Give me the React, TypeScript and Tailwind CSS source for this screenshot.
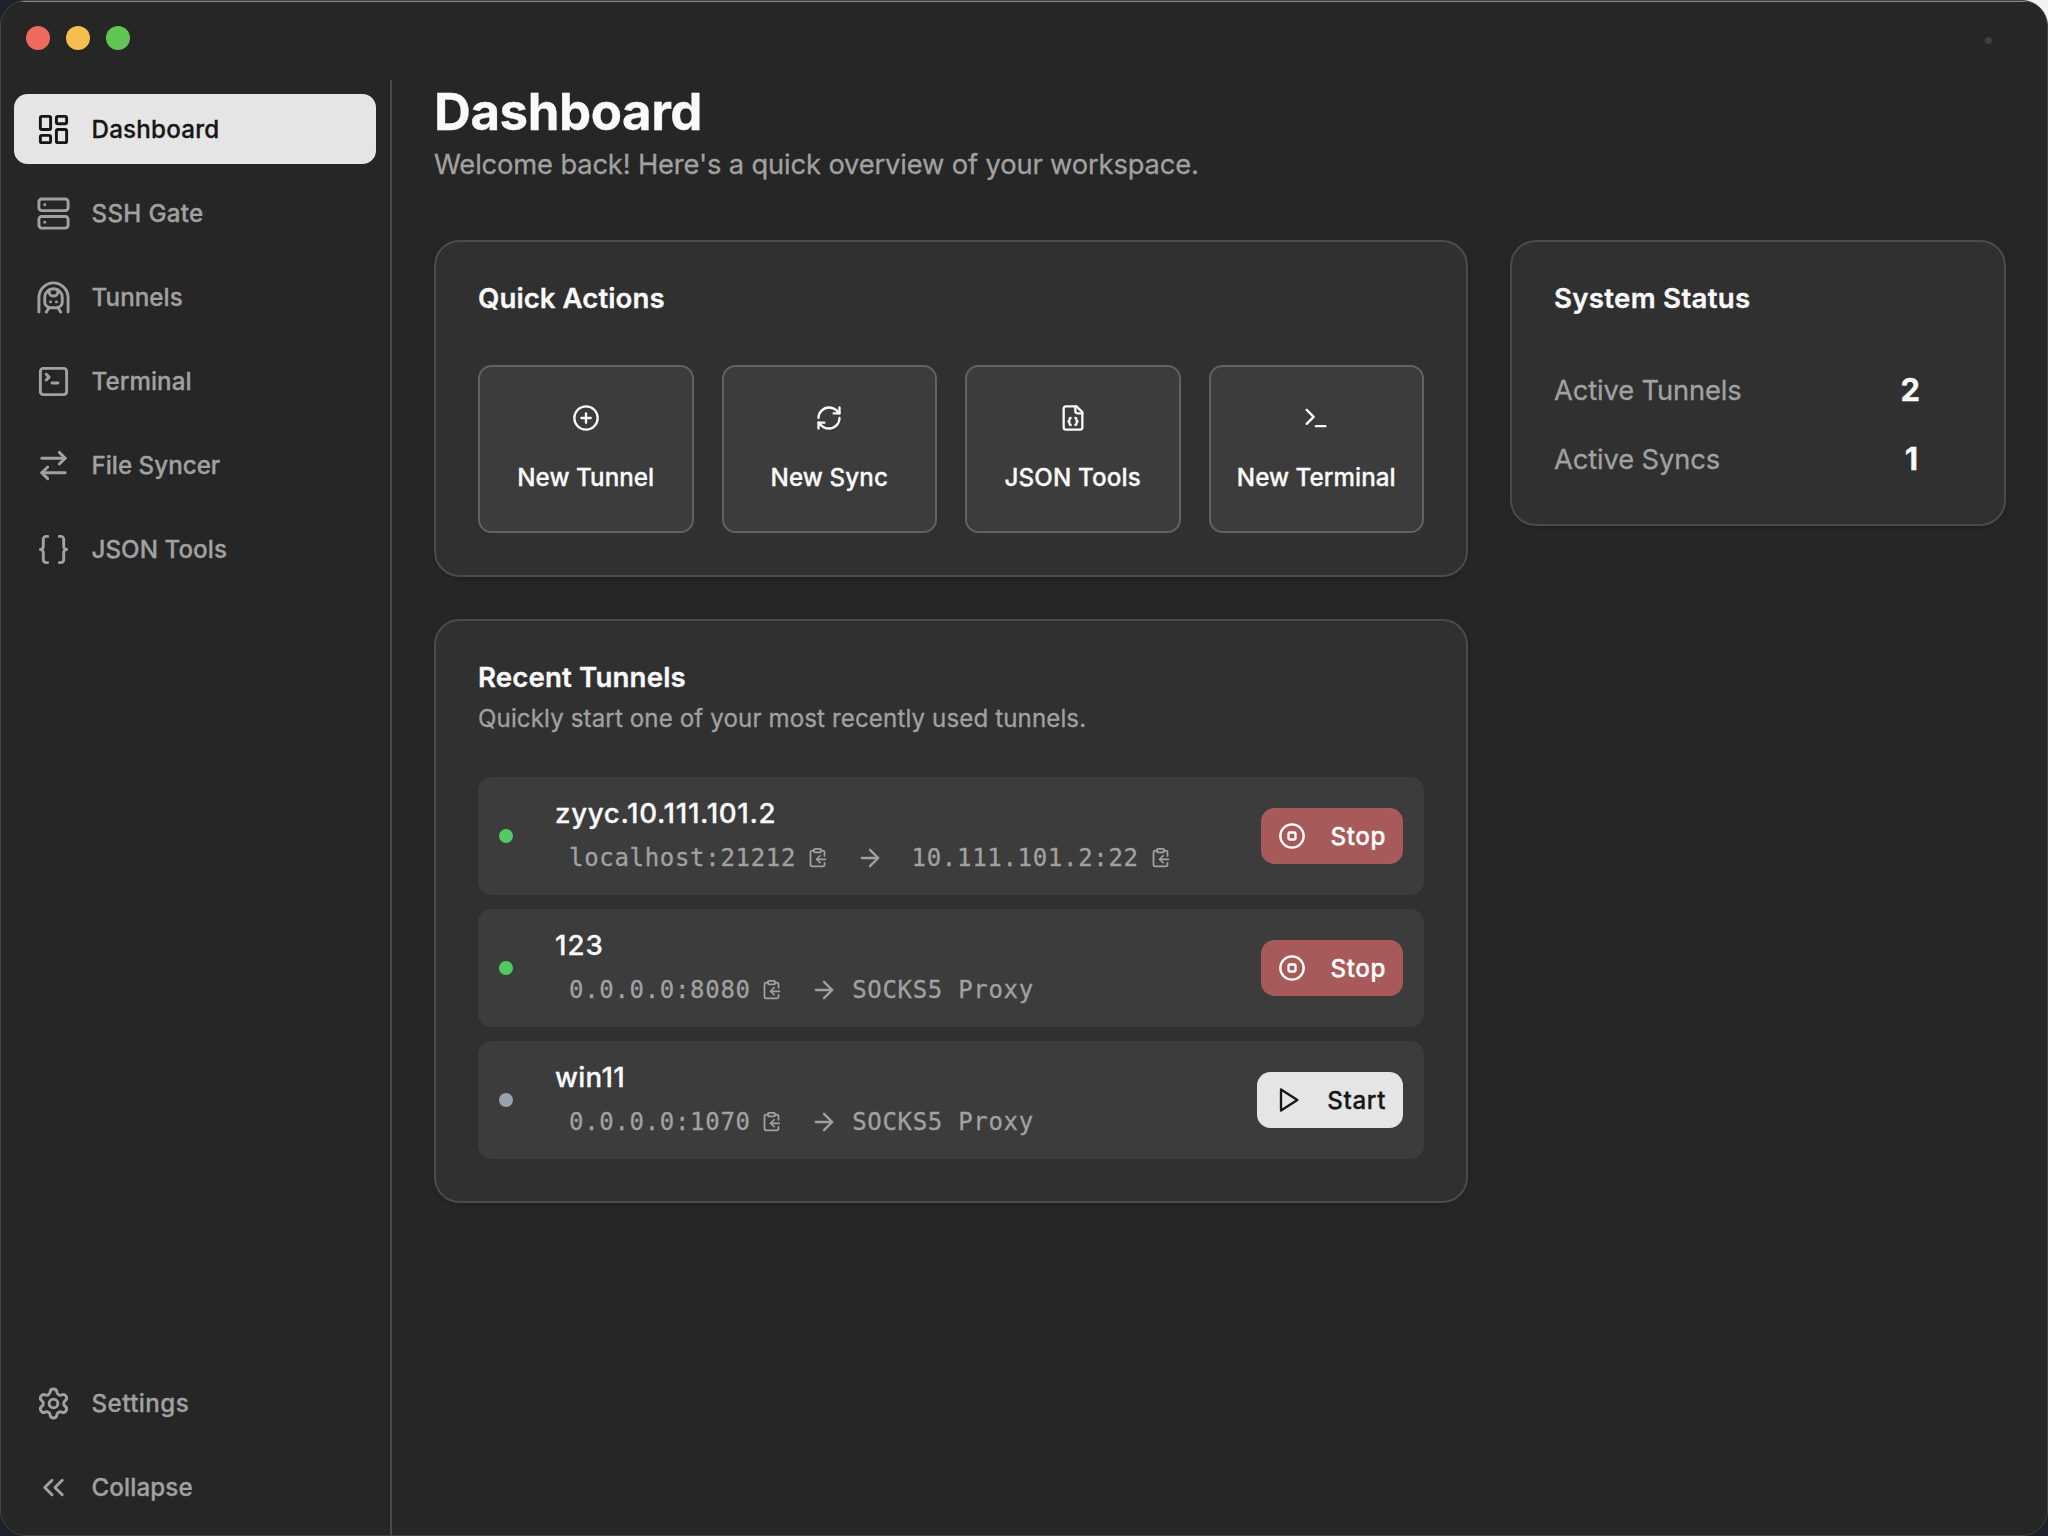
import React from "react";
import {
  ArrowRight,
  ArrowRightLeft,
  Braces,
  ChevronsLeft,
  CirclePlus,
  CircleStop,
  LayoutDashboard,
  RefreshCw,
  Server,
  Settings,
  SquareTerminal,
  Terminal,
  TrainFrontTunnel,
} from "lucide-react";

type IconType = React.ComponentType<{ className?: string; strokeWidth?: number }>;

type NavEntry = { label: string; icon: IconType; tracking: string; active?: boolean };

const mainNav: NavEntry[] = [
  { label: "Dashboard", icon: LayoutDashboard, tracking: "tracking-[0.2px]", active: true },
  { label: "SSH Gate", icon: Server, tracking: "tracking-[0.3px]" },
  { label: "Tunnels", icon: TrainFrontTunnel, tracking: "tracking-[0.05px]" },
  { label: "Terminal", icon: SquareTerminal, tracking: "tracking-[0.05px]" },
  { label: "File Syncer", icon: ArrowRightLeft, tracking: "tracking-[0px]" },
  { label: "JSON Tools", icon: Braces, tracking: "tracking-[0.04px]" },
];

const footerNav: NavEntry[] = [
  { label: "Settings", icon: Settings, tracking: "tracking-[0.42px]" },
  { label: "Collapse", icon: ChevronsLeft, tracking: "tracking-[0.1px]" },
];

function FileJsonIcon({ className }: { className?: string }) {
  return (
    <svg
      className={className}
      viewBox="0 0 24 24"
      fill="none"
      stroke="currentColor"
      strokeWidth={2}
      strokeLinecap="round"
      strokeLinejoin="round"
    >
      <path d="M15 2H6a2 2 0 0 0-2 2v16a2 2 0 0 0 2 2h12a2 2 0 0 0 2-2V7Z" />
      <path d="M14 2v4a2 2 0 0 0 2 2h4" />
      <path d="M10 12a1 1 0 0 0-1 1v1a1 1 0 0 1-1 1 1 1 0 0 1 1 1v1a1 1 0 0 0 1 1" />
      <path d="M14 18a1 1 0 0 0 1-1v-1a1 1 0 0 1 1-1 1 1 0 0 1-1-1v-1a1 1 0 0 0-1-1" />
    </svg>
  );
}

function ClipboardCopyIcon() {
  return (
    <svg
      className="size-[21px] shrink-0"
      viewBox="0 0 24 24"
      fill="none"
      stroke="currentColor"
      strokeWidth={2}
      strokeLinecap="round"
      strokeLinejoin="round"
    >
      <rect width="8" height="4" x="8" y="2" rx="1" ry="1" />
      <path d="M8 4H6a2 2 0 0 0-2 2v14a2 2 0 0 0 2 2h12a2 2 0 0 0 2-2v-2" />
      <path d="M16 4h2a2 2 0 0 1 2 2v4" />
      <path d="M21 14H11" />
      <path d="m15 10-4 4 4 4" />
    </svg>
  );
}

function PlayIcon() {
  return (
    <svg
      className="size-7"
      viewBox="0 0 24 24"
      fill="none"
      stroke="currentColor"
      strokeWidth={2}
      strokeLinecap="round"
      strokeLinejoin="round"
    >
      <polygon points="6 3 20 12 6 21 6 3" />
    </svg>
  );
}

function NavItem({ label, icon: Icon, tracking, active }: NavEntry) {
  return (
    <button
      className={`flex h-[70px] w-full items-center gap-[21px] rounded-[13.5px] pl-[21.5px] text-[24.2px] font-[540] ${tracking} ${
        active ? "bg-[#e5e5e5] text-[#171717]" : "text-[#a1a1a1]"
      }`}
    >
      <Icon className="size-[35px] shrink-0" strokeWidth={2} />
      <span className="pt-0.5">{label}</span>
    </button>
  );
}

function Card({ className = "", children }: { className?: string; children: React.ReactNode }) {
  return (
    <section
      className={`rounded-[25.5px] border-2 border-[#4b4b4b] bg-[#303030] px-[42px] shadow-[0_2px_4px_rgba(0,0,0,0.14)] ${className}`}
    >
      {children}
    </section>
  );
}

const actions: { label: string; icon: IconType; tracking: string }[] = [
  { label: "New Tunnel", icon: CirclePlus, tracking: "tracking-[0.04px]" },
  { label: "New Sync", icon: RefreshCw, tracking: "tracking-[0.1px]" },
  { label: "JSON Tools", icon: FileJsonIcon, tracking: "tracking-[0.15px]" },
  { label: "New Terminal", icon: Terminal, tracking: "tracking-[0.05px]" },
];

const tunnels = [
  { name: "zyyc.10.111.101.2", tracking: "tracking-[0.66px]", local: "localhost:21212", remote: "10.111.101.2:22", running: true },
  { name: "123", tracking: "tracking-[1px]", local: "0.0.0.0:8080", remote: "", running: true },
  { name: "win11", tracking: "tracking-[0.3px]", local: "0.0.0.0:1070", remote: "", running: false },
];

function TunnelRow({ name, tracking, local, remote, running }: (typeof tunnels)[number]) {
  return (
    <div className="flex h-[118px] items-center rounded-[13.5px] bg-[#3c3c3c] px-[21px]">
      <span className={`size-3.5 shrink-0 rounded-full ${running ? "bg-[#53c961]" : "bg-[#99a1af]"}`} />
      <div className="ml-[42px] flex-1 self-start pt-[15px]">
        <div className={`h-[42px] text-[27.7px] leading-[42px] font-[540] text-[#fafafa] ${tracking}`}>{name}</div>
        <div className="mt-1.5 flex h-[35px] items-center pl-3.5 font-['DejaVu_Sans_Mono',monospace] text-[24px] leading-[35px] tracking-[0.69px] text-[#a1a1a1]">
          <span className="mr-[10.5px] pt-0.5">{local}</span>
          <ClipboardCopyIcon />
          <ArrowRight className="mr-3.5 ml-7 size-7 shrink-0" strokeWidth={2} />
          {remote ? (
            <>
              <span className="mr-[11px] ml-3.5 pt-0.5">{remote}</span>
              <ClipboardCopyIcon />
            </>
          ) : (
            <span className="pt-0.5">SOCKS5 Proxy</span>
          )}
        </div>
      </div>
      {running ? (
        <button className="flex h-14 w-[142px] items-center justify-between rounded-[13.5px] bg-[#a85a5a] px-[17px] text-[24.2px] font-[540] tracking-[0.6px] text-white">
          <CircleStop className="size-7" strokeWidth={2} />
          <span className="pt-0.5">Stop</span>
        </button>
      ) : (
        <button className="flex h-14 w-[146px] items-center justify-between rounded-[13.5px] bg-[#e5e5e5] px-[17px] text-[24.2px] font-[540] tracking-[0.6px] text-[#171717]">
          <PlayIcon />
          <span className="pt-0.5">Start</span>
        </button>
      )}
    </div>
  );
}

export default function App() {
  return (
    <div className="relative h-[1536px] w-[2048px] overflow-hidden bg-[#1f212c] font-['Inter','Liberation_Sans',sans-serif] [-webkit-text-stroke:0.3px]">
      <div className="absolute top-0 right-0 size-7 bg-[#f2f2f2]" />
      <div className="relative flex h-full flex-col overflow-hidden rounded-[26px] border border-[#434343] bg-[#262626]">
        <div className="absolute -top-px right-5 left-5 h-0.5 bg-[#85888a]" />
        <header className="flex h-[79px] shrink-0 items-start justify-between pr-[55px] pl-[25px]">
          <div className="flex gap-4 pt-[25px]">
            <span className="size-6 rounded-full bg-[#ee6a5f]" />
            <span className="size-6 rounded-full bg-[#f5bf4f]" />
            <span className="size-6 rounded-full bg-[#61c554]" />
          </div>
          <span className="mt-9 size-[7px] rounded-full bg-[#404040]" />
        </header>

        <div className="flex min-h-0 flex-1">
          <aside className="flex w-[391px] shrink-0 flex-col justify-between border-r-2 border-[#4a4a4a] pt-3.5 pr-3.5 pb-[13px] pl-[13px]">
            <nav className="flex flex-col gap-3.5">
              {mainNav.map((n) => (
                <NavItem key={n.label} {...n} />
              ))}
            </nav>
            <nav className="flex flex-col gap-3.5">
              {footerNav.map((n) => (
                <NavItem key={n.label} {...n} />
              ))}
            </nav>
          </aside>

          <main className="flex-1 pr-[41px] pl-[42px]">
            <h1 className="h-16 text-[51px] leading-[63px] font-bold tracking-[-0.45px] text-[#fafafa]">Dashboard</h1>
            <p className="h-[42px] text-[27.3px] leading-[42px] tracking-[-0.14px] text-[#a1a1a1]">
              Welcome back! Here's a quick overview of your workspace.
            </p>

            <div className="mt-[54px] grid grid-cols-[1034px_496px] items-start gap-[42px]">
              <div className="flex flex-col gap-[42px]">
                <Card className="h-[337px] pt-[42px]">
                  <h2 className="text-[27.7px] leading-7 font-semibold tracking-[0.02px] text-[#fafafa]">Quick Actions</h2>
                  <div className="mt-[53px] grid grid-cols-4 gap-7">
                    {actions.map(({ label, icon: Icon, tracking }) => (
                      <button
                        key={label}
                        className="flex h-[168px] flex-col items-center justify-center gap-7 rounded-[13.5px] border-2 border-[#626262] bg-[#3c3c3c] text-[#fafafa]"
                      >
                        <Icon className="size-7" strokeWidth={2} />
                        <span className={`text-[24.2px] leading-[35px] font-[540] whitespace-nowrap ${tracking}`}>{label}</span>
                      </button>
                    ))}
                  </div>
                </Card>

                <Card className="h-[584px] pt-[42px]">
                  <h2 className="text-[27.7px] leading-7 font-semibold tracking-[0.12px] text-[#fafafa]">Recent Tunnels</h2>
                  <p className="mt-[10px] text-[24.1px] leading-[35px] tracking-[0.12px] text-[#a1a1a1]">
                    Quickly start one of your most recently used tunnels.
                  </p>
                  <div className="mt-[41px] flex flex-col gap-3.5">
                    {tunnels.map((t) => (
                      <TunnelRow key={t.name} {...t} />
                    ))}
                  </div>
                </Card>
              </div>

              <Card className="h-[286px] pt-[42px]">
                <h2 className="text-[27.7px] leading-7 font-semibold tracking-[0.26px] text-[#fafafa]">System Status</h2>
                <div className="mt-[54px] flex flex-col gap-[21px] pr-[42px] text-[27.3px] tracking-[-0.12px] text-[#a1a1a1]">
                  <div className="flex h-12 items-center justify-between">
                    <span className="pt-0.5">Active Tunnels</span>
                    <span className="text-[31px] font-bold text-[#fafafa]">2</span>
                  </div>
                  <div className="flex h-12 items-center justify-between">
                    <span className="pt-0.5">Active Syncs</span>
                    <span className="pr-0.5 text-[31px] font-bold text-[#fafafa]">1</span>
                  </div>
                </div>
              </Card>
            </div>
          </main>
        </div>
      </div>
    </div>
  );
}
